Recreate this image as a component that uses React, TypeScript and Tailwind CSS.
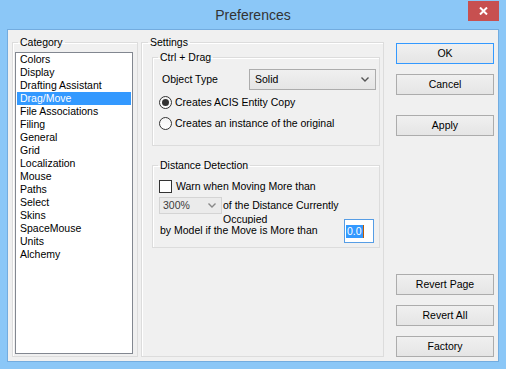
const categories = [
  'Colors',
  'Display',
  'Drafting Assistant',
  'Drag/Move',
  'File Associations',
  'Filing',
  'General',
  'Grid',
  'Localization',
  'Mouse',
  'Paths',
  'Select',
  'Skins',
  'SpaceMouse',
  'Units',
  'Alchemy',
];

const font = "font-['Liberation_Sans',Arial,sans-serif]";

function Chevron({ color = '#555' }: { color?: string }) {
  return (
    <svg width="8" height="5" viewBox="0 0 8 5">
      <path d="M0.5 0.5 L4 4 L7.5 0.5" fill="none" stroke={color} strokeWidth="1.4" />
    </svg>
  );
}

function Radio({ checked, label }: { checked?: boolean; label: string }) {
  return (
    <div className="flex items-center gap-[3px] h-[13px]">
      <span className="w-[13px] h-[13px] rounded-full border border-[#333] bg-gradient-to-b from-[#f4f4f4] to-[#fff] flex items-center justify-center">
        {checked && <span className="w-[7px] h-[7px] rounded-full bg-[#333]" />}
      </span>
      <span>{label}</span>
    </div>
  );
}

function Button({ label, primary }: { label: string; primary?: boolean }) {
  return (
    <button
      className={`h-[21px] w-[98px] border ${primary ? 'border-[#3399ff]' : 'border-[#acacac]'} bg-gradient-to-b from-[#f0f0f0] to-[#e5e5e5] text-black leading-none`}
    >
      {label}
    </button>
  );
}

export default function App() {
  return (
    <div className={`w-[506px] h-[369px] bg-[#8bc7f7] ${font} text-[10.5px] text-black overflow-hidden`}>
      {/* Title bar */}
      <div className="relative h-[29px] flex items-center justify-center">
        <span className="text-[14px] text-[#333] mt-[2px]">Preferences</span>
        <div className="absolute right-[7px] top-[1px] w-[31px] h-[20px] bg-[#c75050] flex items-center justify-center">
          <svg width="9" height="8" viewBox="0 0 9 8">
            <path d="M1 0.5 L8 7.5 M8 0.5 L1 7.5" stroke="#fff" strokeWidth="2" />
          </svg>
        </div>
      </div>

      {/* Client area */}
      <div className="ml-[7px] w-[492px] h-[333px] border border-[#73acdf] bg-[#f0f0f0] flex">
        {/* Category */}
        <fieldset className="ml-[4px] mt-[6px] w-[126px] h-[321px] border border-[#dcdcdc] shadow-[inset_1px_1px_0_#fff] flex flex-col">
          <legend className="ml-[5px] px-[2px] leading-[13px]">Category</legend>
          <div className="ml-[2px] mt-[3px] w-[118px] h-[302px] border border-[#828790] bg-white leading-[13px]">
            {categories.map((c) => (
              <div
                key={c}
                className={c === 'Drag/Move' ? 'mx-[1px] pl-[3px] bg-[#3399ff] text-white' : 'pl-[4px]'}
              >
                {c}
              </div>
            ))}
          </div>
        </fieldset>

        {/* Settings */}
        <fieldset className="ml-[3px] mt-[6px] w-[243px] h-[321px] border border-[#dcdcdc] shadow-[inset_1px_1px_0_#fff]">
          <legend className="ml-[6px] px-[2px] leading-[13px]">Settings</legend>

          <fieldset className="ml-[10px] mt-[2px] w-[228px] h-[95px] border border-[#dcdcdc] shadow-[inset_1px_1px_0_#fff]">
            <legend className="ml-[5px] px-[2px] leading-[13px]">Ctrl + Drag</legend>
            <div className="flex items-center mt-[5px] pl-[9px]">
              <span className="w-[87px]">Object Type</span>
              <div className="w-[127px] h-[21px] border border-[#acacac] bg-gradient-to-b from-[#f0f0f0] to-[#e5e5e5] flex items-center justify-between pl-[5px] pr-[6px]">
                <span>Solid</span>
                <Chevron />
              </div>
            </div>
            <div className="pl-[6px] mt-[6px] flex flex-col gap-[8px]">
              <Radio checked label="Creates ACIS Entity Copy" />
              <Radio label="Creates an instance of the original" />
            </div>
          </fieldset>

          <fieldset className="ml-[10px] mt-[13px] w-[228px] h-[89px] border border-[#dcdcdc] shadow-[inset_1px_1px_0_#fff]">
            <legend className="ml-[5px] px-[2px] leading-[13px]">Distance Detection</legend>
            <div className="pl-[6px] mt-[8px] flex items-center gap-[4px] h-[13px]">
              <span className="w-[13px] h-[13px] border border-[#333] bg-white" />
              <span>Warn when Moving More than</span>
            </div>
            <div className="pl-[6px] mt-[4px] flex items-start">
              <div className="w-[63px] h-[17px] border border-[#d4d4d4] bg-[#ebebeb] flex items-center justify-between pl-[3px] pr-[5px] text-[#3a3a3a]">
                <span>300%</span>
                <Chevron color="#888" />
              </div>
              <div className="ml-[1px] w-[120px] h-[27px] overflow-hidden leading-[14px] pt-[1px]">
                of the Distance Currently Occupied
              </div>
            </div>
            <div className="pl-[7px] -mt-[5px] flex items-end justify-between pr-[5px]">
              <span className="mb-[4px]">by Model if the Move is More than</span>
              <div className="w-[30px] h-[24px] border border-[#569de5] bg-white flex items-center pl-[1px]">
                <span className="bg-[#3399ff] text-white leading-[13px] px-[1px]">0.0</span>
                <span className="w-[1px] h-[13px] bg-[#c05a00]" />
              </div>
            </div>
          </fieldset>
        </fieldset>

        {/* Buttons */}
        <div className="ml-[12px] mt-[13px] mb-[4px] flex flex-col justify-between">
          <div className="flex flex-col">
            <Button primary label="OK" />
            <div className="mt-[10px]">
              <Button label="Cancel" />
            </div>
            <div className="mt-[20px]">
              <Button label="Apply" />
            </div>
          </div>
          <div className="flex flex-col gap-[10px]">
            <Button label="Revert Page" />
            <Button label="Revert All" />
            <Button label="Factory" />
          </div>
        </div>
      </div>
    </div>
  );
}
